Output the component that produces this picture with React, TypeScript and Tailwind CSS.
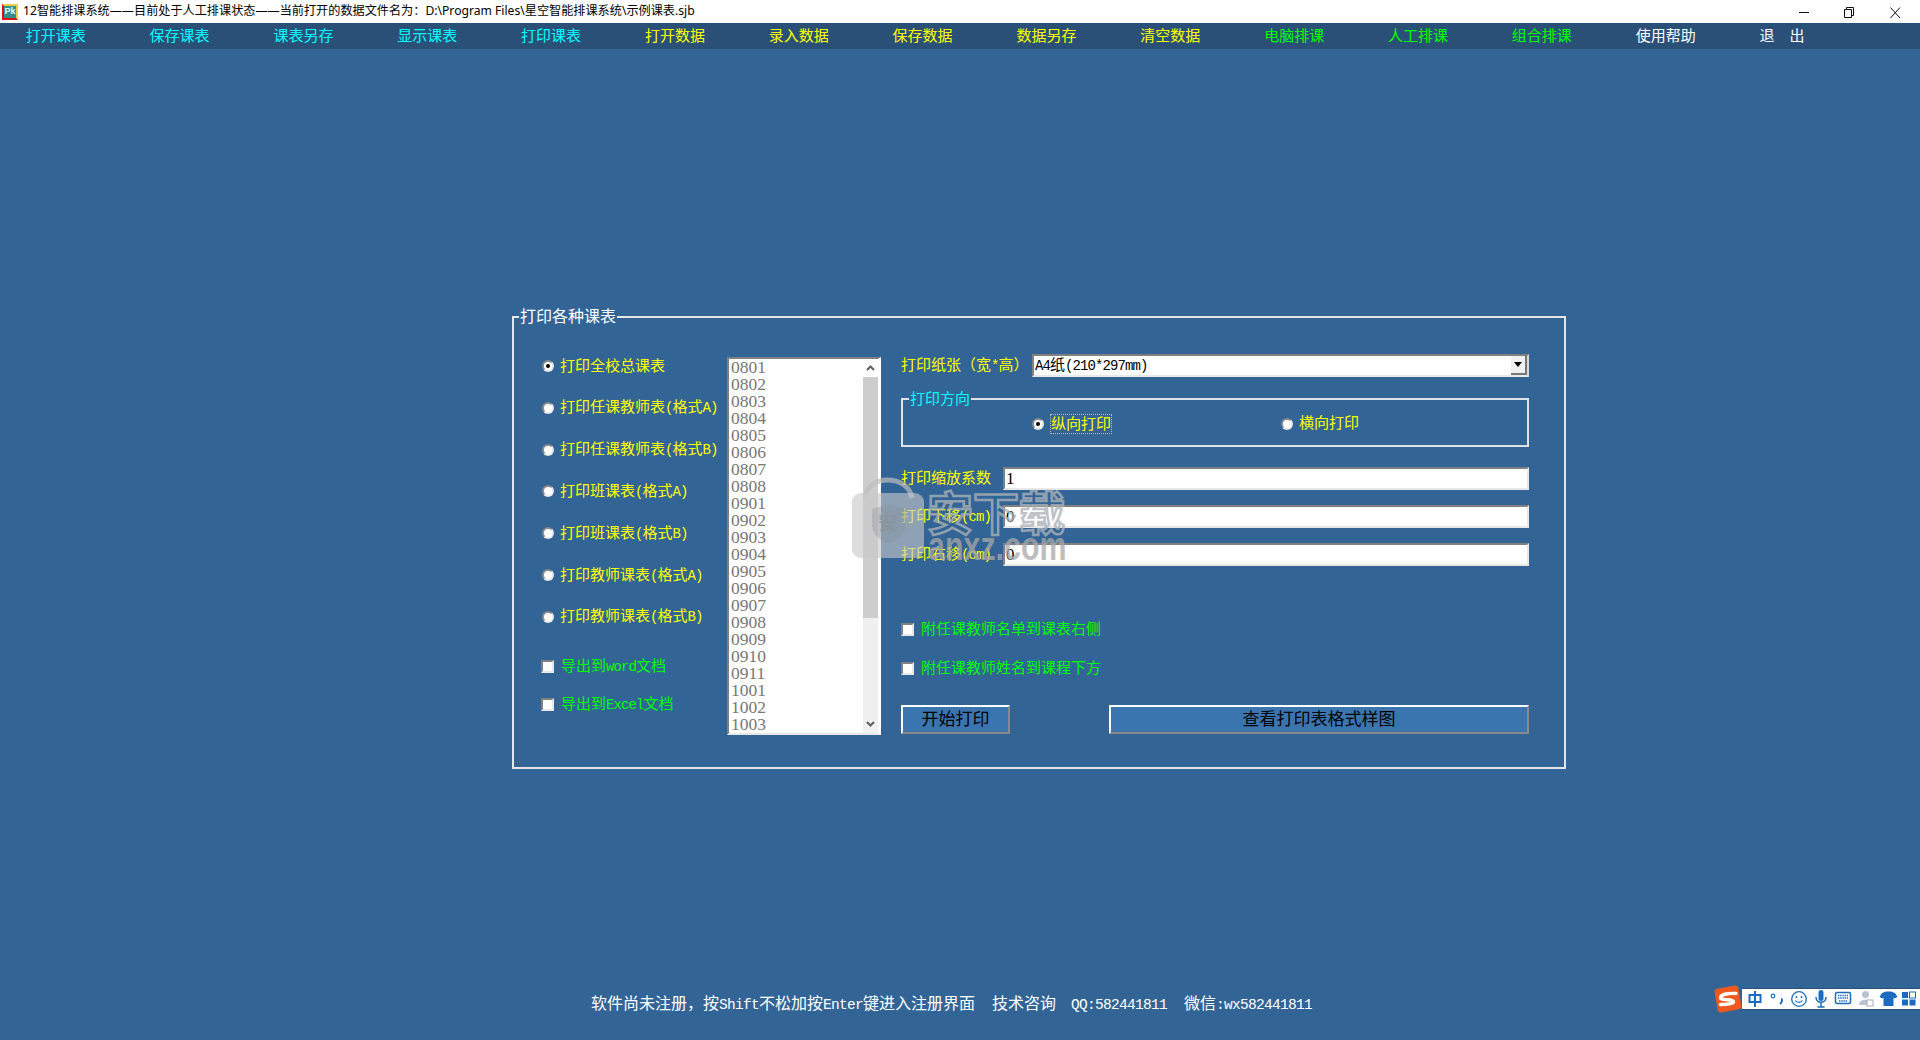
import React from "react";

const M = ({ children }: { children: React.ReactNode }) => (
  <span className="font-['Liberation_Mono',monospace] text-[14px] tracking-[-0.9px]">{children}</span>
);

const F = ({ children }: { children: React.ReactNode }) => (
  <span className="font-['Liberation_Mono',monospace] text-[14.5px] tracking-[-0.7px]">{children}</span>
);

const Radio = ({ on }: { on?: boolean }) => (
  <span className="flex h-[12px] w-[12px] shrink-0 items-center justify-center rounded-full border-2 border-[#8a8a8a] border-r-[#e8e8e8] border-b-[#e8e8e8] bg-white">
    {on && <span className="h-[4px] w-[4px] rounded-full bg-black" />}
  </span>
);

const Check = () => (
  <span className="h-[13px] w-[13px] shrink-0 border-2 border-[#808080] border-r-[#e8e8e8] border-b-[#e8e8e8] bg-white" />
);

const menu: [string, string][] = [
  ["打开课表", "text-[#00ffff]"],
  ["保存课表", "text-[#00ffff]"],
  ["课表另存", "text-[#00ffff]"],
  ["显示课表", "text-[#00ffff]"],
  ["打印课表", "text-[#00ffff]"],
  ["打开数据", "text-[#ffff00]"],
  ["录入数据", "text-[#ffff00]"],
  ["保存数据", "text-[#ffff00]"],
  ["数据另存", "text-[#ffff00]"],
  ["清空数据", "text-[#ffff00]"],
  ["电脑排课", "text-[#00ff00]"],
  ["人工排课", "text-[#00ff00]"],
  ["组合排课", "text-[#00ff00]"],
  ["使用帮助", "text-white"],
  ["退\u3000出", "text-white"],
];

const radios: React.ReactNode[] = [
  "打印全校总课表",
  <>打印任课教师表<M>(</M>格式<M>A)</M></>,
  <>打印任课教师表<M>(</M>格式<M>B)</M></>,
  <>打印班课表<M>(</M>格式<M>A)</M></>,
  <>打印班课表<M>(</M>格式<M>B)</M></>,
  <>打印教师课表<M>(</M>格式<M>A)</M></>,
  <>打印教师课表<M>(</M>格式<M>B)</M></>,
];

const classes = [
  "0801","0802","0803","0804","0805","0806","0807","0808","0901","0902","0903","0904",
  "0905","0906","0907","0908","0909","0910","0911","1001","1002","1003",
];

const Field = ({ label, value }: { label: React.ReactNode; value: string }) => (
  <div className="flex h-[23px] items-center">
    <span className="w-[102px] shrink-0 text-[#ffff00]">{label}</span>
    <div className="flex h-[23px] flex-1 items-center border-2 border-[#808080] border-r-[#e8e8e8] border-b-[#e8e8e8] bg-white pl-[1px] text-[17px] text-black">
      {value}
    </div>
  </div>
);

const btn =
  "flex h-[29px] items-center justify-center border-2 border-white border-r-[#8a8a8a] border-b-[#8a8a8a] bg-[#3b75b0] text-[17px] text-black";

const Sogou = () => (
  <div className="absolute bottom-[30px] right-0 flex h-[22px] w-[178px] items-center border-y border-[#2a5078] bg-white">
    <svg className="absolute -left-[29px] -top-[5px]" width="30" height="30" viewBox="0 0 30 30">
      <rect x="3" y="3" width="24" height="24" rx="3" fill="#f0581f" transform="rotate(-10 15 15)" />
      <path d="M23 9.5 C16 9 8 10 7.5 13.5 C7 17 20 14.5 20.5 17.5 C21 20 13 20.5 7.5 20.5" fill="none" stroke="#fff" strokeWidth="3.4" strokeLinecap="round" />
    </svg>
    <svg width="178" height="20" viewBox="0 0 178 20" fill="#1b6cc0">
      <path d="M7.5 6h11v7h-11zM13 2v16" fill="none" stroke="#1b6cc0" strokeWidth="2" />
      <circle cx="31" cy="7" r="1.8" fill="none" stroke="#1b6cc0" strokeWidth="1.2" />
      <path d="M39 10c1.5 0 1.5 3-1 5" fill="none" stroke="#1b6cc0" strokeWidth="2" />
      <circle cx="57" cy="10" r="7.3" fill="none" stroke="#1b6cc0" strokeWidth="1.3" />
      <circle cx="54.5" cy="8" r="1" />
      <circle cx="59.5" cy="8" r="1" />
      <path d="M53.5 11.5c1.5 2.5 5.500 2.500 7 0" fill="none" stroke="#1b6cc0" strokeWidth="1.2" />
      <rect x="76.500" y="1" width="5" height="11" rx="2.500" />
      <path d="M74 8c0 7 10 7 10 0M79 14v4M75.500 18h7" fill="none" stroke="#1b6cc0" strokeWidth="1.5" />
      <rect x="93.500" y="3.500" width="15" height="11" rx="1.500" fill="none" stroke="#1b6cc0" strokeWidth="1.500" />
      <path d="M96 6.500h10M96 9h10M97 12h8" stroke="#1b6cc0" strokeWidth="1.300" strokeDasharray="1.400 0.800" />
      <circle cx="123.500" cy="5.500" r="3.500" fill="#b8c2d0" />
      <path d="M117 16c0-7 13-7 13 0z" fill="#b8c2d0" />
      <rect x="125" y="11" width="6" height="6" fill="#fff" stroke="#a4aebc" />
      <path d="M140 4l4-1.500h5l4 1.500 2.500 4-3 1.500-1-1V17h-10V8.500l-1 1-3-1.500z" />
      <rect x="160" y="3" width="6" height="6" />
      <rect x="167.500" y="3" width="6" height="6" fill="none" stroke="#1b6cc0" />
      <rect x="160" y="10.500" width="6" height="6" />
      <rect x="167.500" y="10.500" width="6" height="6" />
    </svg>
  </div>
);

const Watermark = () => (
  <div className="pointer-events-none absolute left-[850px] top-[476px] h-[95px] w-[225px] font-['Liberation_Sans','Noto_Sans_CJK_SC',sans-serif]">
    <svg className="absolute left-0 top-0" width="78" height="84" viewBox="0 0 78 84">
      <path d="M15 22C17 -2 58 -2 62 22" fill="none" stroke="rgba(190,190,190,.7)" strokeWidth="5" />
      <rect x="2" y="17" width="72" height="65" rx="9" fill="rgba(200,200,200,.62)" />
      <path d="M22 33l17-5 17 5v17c0 9-9 14-17 18-8-4-17-9-17-18z" fill="rgba(130,140,150,.3)" />
    </svg>
    <span className="absolute left-[28px] top-[36px] text-[19px] font-bold leading-[24px] text-[#8b929a]/70">安</span>
    <span className="absolute left-[77px] top-[12px] text-[46px] font-bold leading-[52px] text-transparent [-webkit-text-stroke:2.5px_rgba(172,177,183,0.8)]">安下载</span>
    <span className="absolute left-[78px] top-[50px] origin-left scale-x-[0.76] text-[40px] font-bold leading-[40px] text-[#a8a8a8]/75">anxz.com</span>
  </div>
);

export default function App() {
  return (
    <div className="relative flex h-[1040px] w-[1920px] flex-col overflow-hidden bg-[#326496] font-['Liberation_Serif','Noto_Sans_CJK_SC',serif] text-[15px]">
      {/* title bar */}
      <div className="flex h-[23px] items-center bg-white pl-[2px] pr-[17px] font-['Noto_Sans','Noto_Sans_CJK_SC',sans-serif] text-[12.15px] text-black">
        <div className="flex h-[16px] w-[16px] items-center justify-center border-2 border-[#e01010] border-r-[#e8d040] border-t-[#e8d040] bg-[#2f8f8f] font-['Liberation_Sans'] text-[9px] font-bold leading-none text-[#dff]">
          Pk
        </div>
        <span className="ml-[5px] whitespace-nowrap">
          12智能排课系统——目前处于人工排课状态——当前打开的数据文件名为：D:\Program Files\星空智能排课系统\示例课表.sjb
        </span>
        <svg className="ml-auto" width="104" height="14" viewBox="0 0 104 14" fill="none" stroke="#111" strokeWidth="1">
          <path d="M0 7.500h10" />
          <path d="M45.500 4.500h7v8h-7zM47.500 4.500v-2h7v8h-2" />
          <path d="M91.500 2.500l9.500 10.500M101 2.500l-9.500 10.500" />
        </svg>
      </div>

      {/* menu */}
      <div className="flex h-[26px] items-center bg-[#2a5078]">
        {menu.map(([t, c]) => (
          <span key={t} className={`w-[123.85px] shrink-0 whitespace-pre pl-[25.7px] ${c}`}>
            {t}
          </span>
        ))}
      </div>

      {/* panel */}
      <fieldset className="ml-[512px] mt-[258px] h-[462px] w-[1054px] border-2 border-[#e4e6e8]">
        <legend className="ml-[5px] h-[20px] px-[1px] text-[16px] leading-[20px] text-white">打印各种课表</legend>
        <div className="flex pl-[27px]">
          <div className="w-[186px] shrink-0 pt-[18px]">
            {radios.map((r, i) => (
              <div key={i} className="flex h-[41.83px] items-center pl-[1px] text-[#ffff00]">
                <Radio on={i === 0} />
                <span className="ml-[6px] whitespace-nowrap">{r}</span>
              </div>
            ))}
            <div className="mt-[10px]">
              <div className="flex h-[38px] items-center text-[#00ff00]">
                <Check />
                <span className="ml-[7px] whitespace-nowrap">导出到<M>word</M>文档</span>
              </div>
              <div className="flex h-[38px] items-center text-[#00ff00]">
                <Check />
                <span className="ml-[7px] whitespace-nowrap">导出到<M>Excel</M>文档</span>
              </div>
            </div>
          </div>

          <div className="mt-[30px] flex h-[378px] w-[154px] shrink-0 border-2 border-[#808080] border-r-[3px] border-r-white border-b-[#e8e8e8] bg-white">
            <div className="flex-1 overflow-hidden pl-[2px] text-[17.5px] leading-[17px] text-[#777777]">
              {classes.map((c) => (
                <div key={c} className="h-[17px]">{c}</div>
              ))}
            </div>
            <div className="flex w-[15px] shrink-0 flex-col bg-[#f0f0f0]">
              <div className="flex h-[18px] items-center justify-center bg-white">
                <svg width="9" height="6" viewBox="0 0 9 6" fill="none" stroke="#606060" strokeWidth="2"><path d="M1 5l3.500-3.500L8 5" /></svg>
              </div>
              <div className="h-[241px] bg-[#cdcdcd]" />
              <div className="flex-1" />
              <div className="flex h-[18px] items-center justify-center">
                <svg width="9" height="6" viewBox="0 0 9 6" fill="none" stroke="#606060" strokeWidth="2"><path d="M1 1l3.500 3.500L8 1" /></svg>
              </div>
            </div>
          </div>

          <div className="ml-[20px] w-[628px] shrink-0 pt-[27px]">
            <div className="flex h-[23px] items-center">
              <span className="w-[131px] shrink-0 whitespace-nowrap text-[#ffff00]">打印纸张（宽<M>*</M>高）</span>
              <div className="flex h-[23px] flex-1 items-center justify-between border-2 border-[#808080] border-r-[#d8d8d8] border-b-[#e8e8e8] bg-white pl-[1px] text-black">
                <span className="whitespace-nowrap"><M>A4</M>纸<M>(210*297mm)</M></span>
                <span className="flex h-[19px] w-[16px] items-center justify-center border-b-2 border-r-2 border-[#777] bg-[#f0f0f0]">
                  <svg width="8" height="5" viewBox="0 0 8 5" fill="#000"><path d="M0 0h8L4 5z" /></svg>
                </span>
              </div>
            </div>

            <fieldset className="mt-[13px] h-[57px] border-2 border-[#dfe3e8]">
              <legend className="ml-[6px] h-[18px] px-[1px] leading-[18px] text-[#00ffff]">打印方向</legend>
              <div className="flex h-[31px] items-center pl-[129px]">
                <div className="flex w-[249px] items-center">
                  <Radio on />
                  <span className="ml-[7px] whitespace-nowrap leading-[18px] text-[#ffff00] outline-1 outline-dotted outline-[#bbbbbb]">纵向打印</span>
                </div>
                <Radio />
                <span className="ml-[6px] whitespace-nowrap text-[#ffff00]">横向打印</span>
              </div>
            </fieldset>

            <div className="mt-[20px] flex flex-col gap-[15px]">
              <Field label="打印缩放系数" value="1" />
              <Field label={<>打印下移<M>(cm)</M></>} value="0" />
              <Field label={<>打印右移<M>(cm)</M></>} value="0" />
            </div>

            <div className="mt-[53px] flex flex-col gap-[18px] text-[#00ff00]">
              <div className="flex h-[21px] items-center">
                <Check />
                <span className="ml-[7px] whitespace-nowrap">附任课教师名单到课表右侧</span>
              </div>
              <div className="flex h-[21px] items-center">
                <Check />
                <span className="ml-[7px] whitespace-nowrap">附任课教师姓名到课程下方</span>
              </div>
            </div>

            <div className="mt-[26px] flex justify-between">
              <div className={`w-[109px] ${btn}`}>开始打印</div>
              <div className={`w-[420px] ${btn}`}>查看打印表格式样图</div>
            </div>
          </div>
        </div>
      </fieldset>

      {/* footer */}
      <div className="ml-[591px] mt-[225px] flex h-[20px] items-center whitespace-nowrap text-[16px] text-white">
        <span className="w-[401px]">软件尚未注册，按<F>Shift</F>不松加按<F>Enter</F>键进入注册界面</span>
        <span className="w-[79px]">技术咨询</span>
        <span className="w-[113px]"><F>QQ:582441811</F></span>
        <span>微信<F>:wx582441811</F></span>
      </div>

      <Watermark />
      <Sogou />
    </div>
  );
}
